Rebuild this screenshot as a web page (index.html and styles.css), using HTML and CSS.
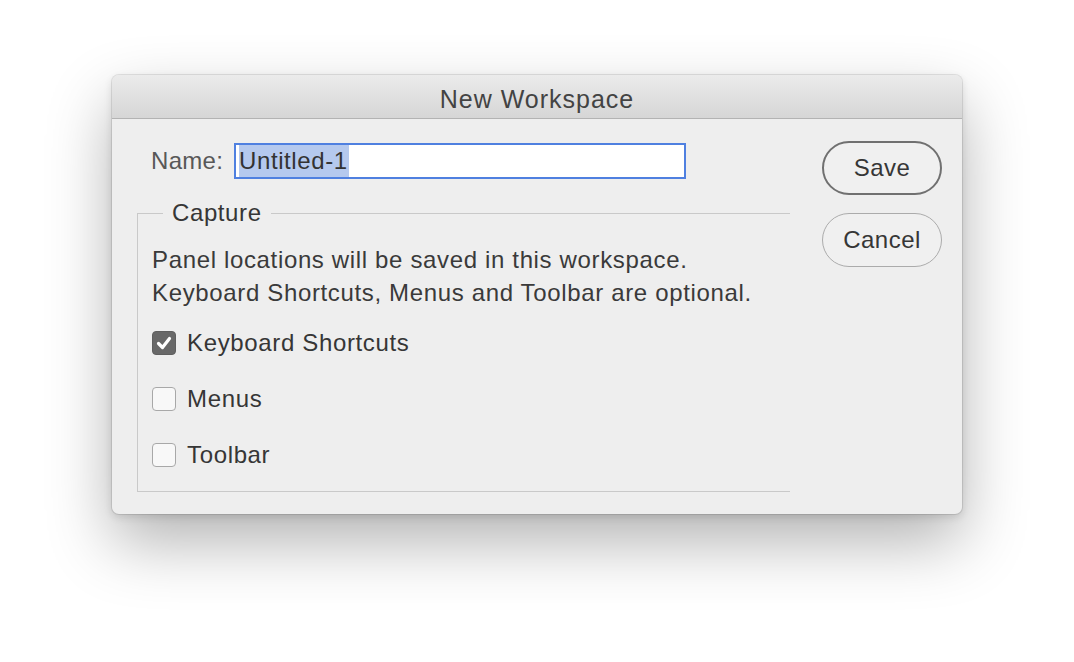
FILE: index.html
```html
<!DOCTYPE html>
<html>
<head>
<meta charset="utf-8">
<link rel="stylesheet" href="styles.css">
</head>
<body>
<div class="dialog">
  <div class="titlebar">New Workspace</div>
  <div class="content">
    <div class="main">
      <div class="name-row">
        <label class="name-label">Name:</label>
        <div class="input"><span class="sel">Untitled-1</span></div>
      </div>
      <fieldset class="capture">
        <legend>Capture</legend>
        <p class="desc">Panel locations will be saved in this workspace.<br>Keyboard Shortcuts, Menus and Toolbar are optional.</p>
        <div class="options">
          <div class="opt">
            <span class="cb checked"><svg width="22" height="22" viewBox="0 0 22 22"><polyline points="5.5,11.5 9.5,15.5 16.5,6.5" fill="none" stroke="#fff" stroke-width="3.2" stroke-linecap="round" stroke-linejoin="round"/></svg></span>
            <span class="opt-label">Keyboard Shortcuts</span>
          </div>
          <div class="opt">
            <span class="cb"></span>
            <span class="opt-label">Menus</span>
          </div>
          <div class="opt">
            <span class="cb"></span>
            <span class="opt-label">Toolbar</span>
          </div>
        </div>
      </fieldset>
    </div>
    <div class="buttons">
      <div class="btn default">Save</div>
      <div class="btn">Cancel</div>
    </div>
  </div>
</div>
</body>
</html>
```
FILE: styles.css
```css
html, body {
  margin: 0;
  padding: 0;
}
body {
  background: #ffffff;
  font-family: "Liberation Sans", Arial, sans-serif;
  width: 1074px;
  height: 662px;
  box-sizing: border-box;
  padding: 75px 0 0 112px;
  overflow: hidden;
  color: #363636;
}
.dialog {
  width: 850px;
  height: 439px;
  background: #eeeeee;
  border-radius: 7px;
  box-shadow: 0 0 0 1px rgba(0,0,0,0.09), 0 28px 65px rgba(0,0,0,0.30), 0 3px 8px rgba(0,0,0,0.12);
  overflow: hidden;
}
.titlebar {
  box-sizing: border-box;
  height: 44px;
  padding-top: 5px;
  border-bottom: 1px solid #b3b3b3;
  background: linear-gradient(#ebebeb, #d6d6d6);
  display: flex;
  align-items: center;
  justify-content: center;
  font-size: 25px;
  letter-spacing: 1px;
  color: #434343;
}
.content {
  display: flex;
  gap: 32px;
  padding: 24px 20px 22px 25px;
}
.main {
  width: 653px;
}
.name-row {
  display: flex;
  align-items: center;
  margin-left: 14px;
  height: 36px;
  gap: 12px;
}
.name-label {
  width: 71px;
  font-size: 24px;
  letter-spacing: 0.3px;
  color: #585858;
  white-space: nowrap;
}
.input {
  width: 452px;
  height: 36px;
  box-sizing: border-box;
  border: 2px solid #4f80e0;
  background: #ffffff;
  padding-left: 3px;
  display: flex;
  align-items: center;
}
.sel {
  background: #b5c9ee;
  font-size: 24px;
  letter-spacing: 0.6px;
  line-height: 32px;
  height: 32px;
  color: #333333;
  padding-right: 1px;
}
.capture {
  margin: 20px 0 0 0;
  padding: 0 0 22px 14px;
  border: none;
  border-top: 1px solid #c9c9c9;
  border-left: 1px solid #c9c9c9;
  border-bottom: 1px solid #c9c9c9;
  min-width: 0;
}
.capture legend {
  padding: 0 9px;
  margin-left: 11px;
  font-size: 24px;
  letter-spacing: 0.6px;
  line-height: 28px;
  color: #363636;
}
.desc {
  margin: 16px 0 0;
  font-size: 24px;
  letter-spacing: 0.65px;
  line-height: 33px;
  color: #3a3a3a;
  white-space: nowrap;
}
.options {
  display: flex;
  flex-direction: column;
  gap: 28px;
  margin-top: 20px;
}
.opt {
  display: flex;
  align-items: center;
  height: 28px;
  gap: 11px;
  font-size: 24px;
  letter-spacing: 0.65px;
  color: #363636;
}
.cb {
  width: 24px;
  height: 24px;
  box-sizing: border-box;
  border: 1px solid #a8a8a8;
  border-radius: 4px;
  background: #f8f8f8;
  display: flex;
  align-items: center;
  justify-content: center;
}
.cb.checked {
  background: #686868;
  border-color: #5f5f5f;
}
.buttons {
  display: flex;
  flex-direction: column;
  gap: 18px;
  width: 120px;
  margin-top: -2px;
}
.btn {
  height: 54px;
  box-sizing: border-box;
  border-radius: 27px;
  border: 1px solid #ababab;
  display: flex;
  align-items: center;
  justify-content: center;
  font-size: 24px;
  letter-spacing: 0.5px;
  color: #363636;
  background: #f0f0f0;
}
.btn.default {
  border: 2px solid #707070;
}
```
